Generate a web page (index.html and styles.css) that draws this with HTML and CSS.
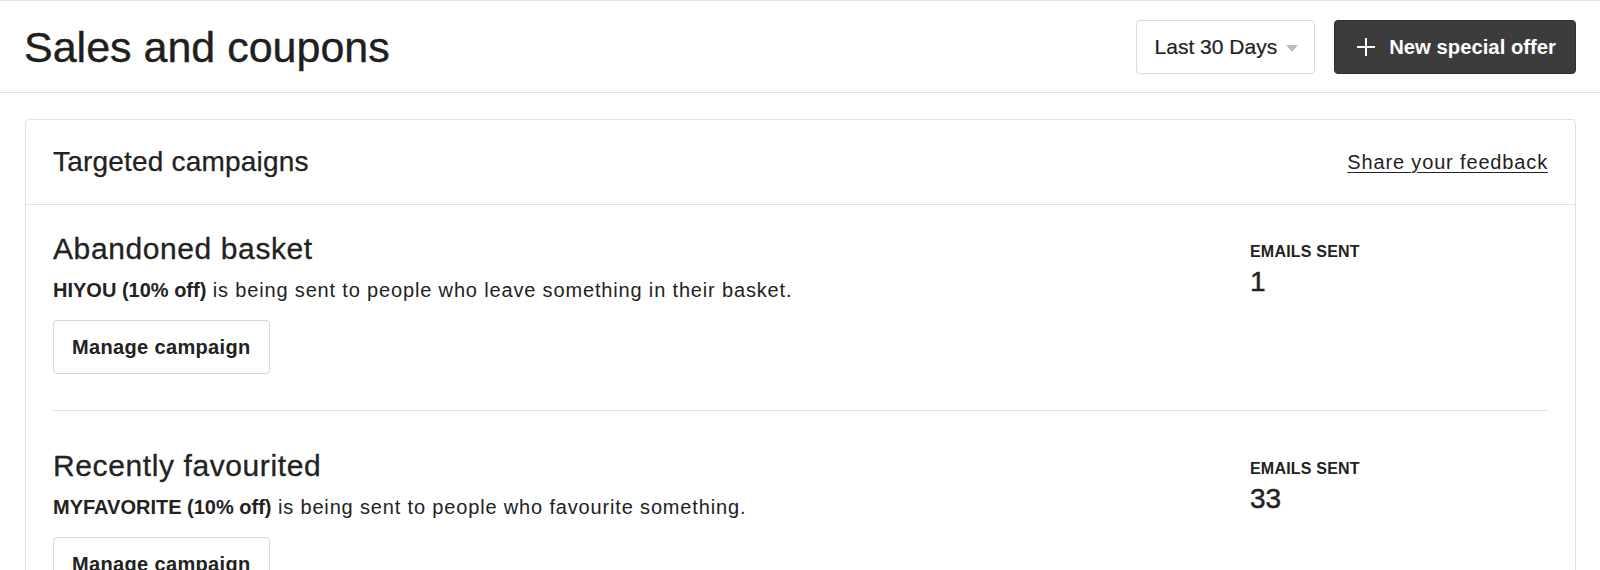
FILE: index.html
```html
<!DOCTYPE html>
<html lang="en">
<head>
<meta charset="utf-8">
<title>Sales and coupons</title>
<link rel="stylesheet" href="styles.css">
</head>
<body>
<header class="page-header">
  <h1 class="page-title">Sales and coupons</h1>
  <div class="header-actions">
    <button class="select-btn" type="button">
      <span>Last 30 Days</span>
      <span class="caret"></span>
    </button>
    <button class="primary-btn" type="button">
      <svg class="plus-icon" width="20" height="20" viewBox="0 0 20 20" aria-hidden="true">
        <line x1="10" y1="1" x2="10" y2="19" stroke="#fff" stroke-width="2"/>
        <line x1="1" y1="10" x2="19" y2="10" stroke="#fff" stroke-width="2"/>
      </svg>
      <span>New special offer</span>
    </button>
  </div>
</header>

<main class="content">
  <section class="card">
    <div class="card-header">
      <h2 class="card-title">Targeted campaigns</h2>
      <a class="feedback-link" href="#">Share your feedback</a>
    </div>
    <div class="campaigns">
      <div class="campaign">
        <div class="campaign-main">
          <h3 class="campaign-title">Abandoned basket</h3>
          <p class="campaign-desc"><strong class="code">HIYOU (10% off)</strong> is being sent to people who leave something in their basket.</p>
          <button class="secondary-btn" type="button">Manage campaign</button>
        </div>
        <div class="campaign-stat">
          <div class="stat-label">EMAILS SENT</div>
          <div class="stat-value">1</div>
        </div>
      </div>
      <div class="campaign">
        <div class="campaign-main">
          <h3 class="campaign-title">Recently favourited</h3>
          <p class="campaign-desc"><strong class="code">MYFAVORITE (10% off)</strong> is being sent to people who favourite something.</p>
          <button class="secondary-btn" type="button">Manage campaign</button>
        </div>
        <div class="campaign-stat">
          <div class="stat-label">EMAILS SENT</div>
          <div class="stat-value">33</div>
        </div>
      </div>
    </div>
  </section>
</main>
</body>
</html>
```

FILE: styles.css
```css
html, body {
  margin: 0;
  padding: 0;
  overflow: hidden;
  background: #ffffff;
}

body {
  font-family: "Liberation Sans", Arial, sans-serif;
  color: #222222;
}

button {
  font-family: inherit;
  color: inherit;
  margin: 0;
  cursor: pointer;
}

.page-header {
  box-sizing: border-box;
  height: 93px;
  border-top: 1px solid #e3e3e6;
  border-bottom: 1px solid #e1e1e1;
  padding: 0 24px 0 24px;
  display: flex;
  align-items: center;
  justify-content: space-between;
}

.page-title {
  margin: 0;
  font-size: 43px;
  line-height: 52px;
  font-weight: normal;
  color: #1f1f1f;
  -webkit-text-stroke: 0.4px #1f1f1f;
}

.header-actions {
  display: flex;
  align-items: center;
  gap: 19px;
  margin-top: 1px;
}

.select-btn {
  box-sizing: border-box;
  height: 54px;
  display: flex;
  align-items: center;
  gap: 9px;
  padding: 0 16px 0 18px;
  background: #ffffff;
  border: 1px solid #dcdcdc;
  border-radius: 4px;
  font-size: 21px;
  color: #222222;
  -webkit-text-stroke: 0.2px #222222;
}

.caret {
  width: 0;
  height: 0;
  border-left: 6px solid transparent;
  border-right: 6px solid transparent;
  border-top: 7px solid #bdbdbd;
  margin-top: 2px;
}

.primary-btn {
  box-sizing: border-box;
  height: 54px;
  display: flex;
  align-items: center;
  gap: 13px;
  padding: 0 19px 0 21px;
  background: #3c3c3c;
  border: 1px solid #2f2f2f;
  border-radius: 4px;
  font-size: 20.3px;
  font-weight: bold;
  color: #ffffff;
}

.plus-icon {
  display: block;
}

.content {
  padding: 26px 24px 0 25px;
}

.card {
  border: 1px solid #e1e1e1;
  border-radius: 4px;
}

.card-header {
  display: flex;
  align-items: center;
  justify-content: space-between;
  padding: 24px 27px;
  border-bottom: 1px solid #e1e1e1;
}

.card-title {
  margin: 0;
  font-size: 28px;
  line-height: 36px;
  font-weight: normal;
  letter-spacing: 0.2px;
  -webkit-text-stroke: 0.25px #222222;
}

.feedback-link {
  font-size: 20px;
  letter-spacing: 0.85px;
  color: #222222;
  text-decoration: underline;
  text-underline-offset: 3px;
  text-decoration-thickness: 1px;
}

.campaigns {
  padding: 0 27px;
}

.campaign {
  display: grid;
  grid-template-columns: 1fr 298px;
  padding: 37px 0 36px;
  border-bottom: 1px solid #e1e1e1;
}

.campaign:first-child {
  padding-top: 26px;
}

.campaign-title {
  margin: 0 0 9px;
  font-size: 30px;
  line-height: 36px;
  font-weight: normal;
  letter-spacing: 0.6px;
  -webkit-text-stroke: 0.3px #222222;
}

.campaign-desc {
  margin: 0;
  font-size: 20px;
  line-height: 28px;
  letter-spacing: 0.84px;
}

.code {
  font-weight: bold;
  letter-spacing: 0;
}

.secondary-btn {
  box-sizing: border-box;
  height: 54px;
  margin-top: 16px;
  padding: 0 18px;
  background: #ffffff;
  border: 1px solid #d6d6d6;
  border-radius: 4px;
  font-size: 20px;
  font-weight: bold;
  letter-spacing: 0.35px;
}

.campaign-stat {
  padding-top: 11px;
}

.stat-label {
  font-size: 16px;
  line-height: 20px;
  font-weight: bold;
  letter-spacing: 0.2px;
}

.stat-value {
  margin-top: 3px;
  font-size: 28px;
  line-height: 34px;
  -webkit-text-stroke: 0.5px #222222;
}
```
